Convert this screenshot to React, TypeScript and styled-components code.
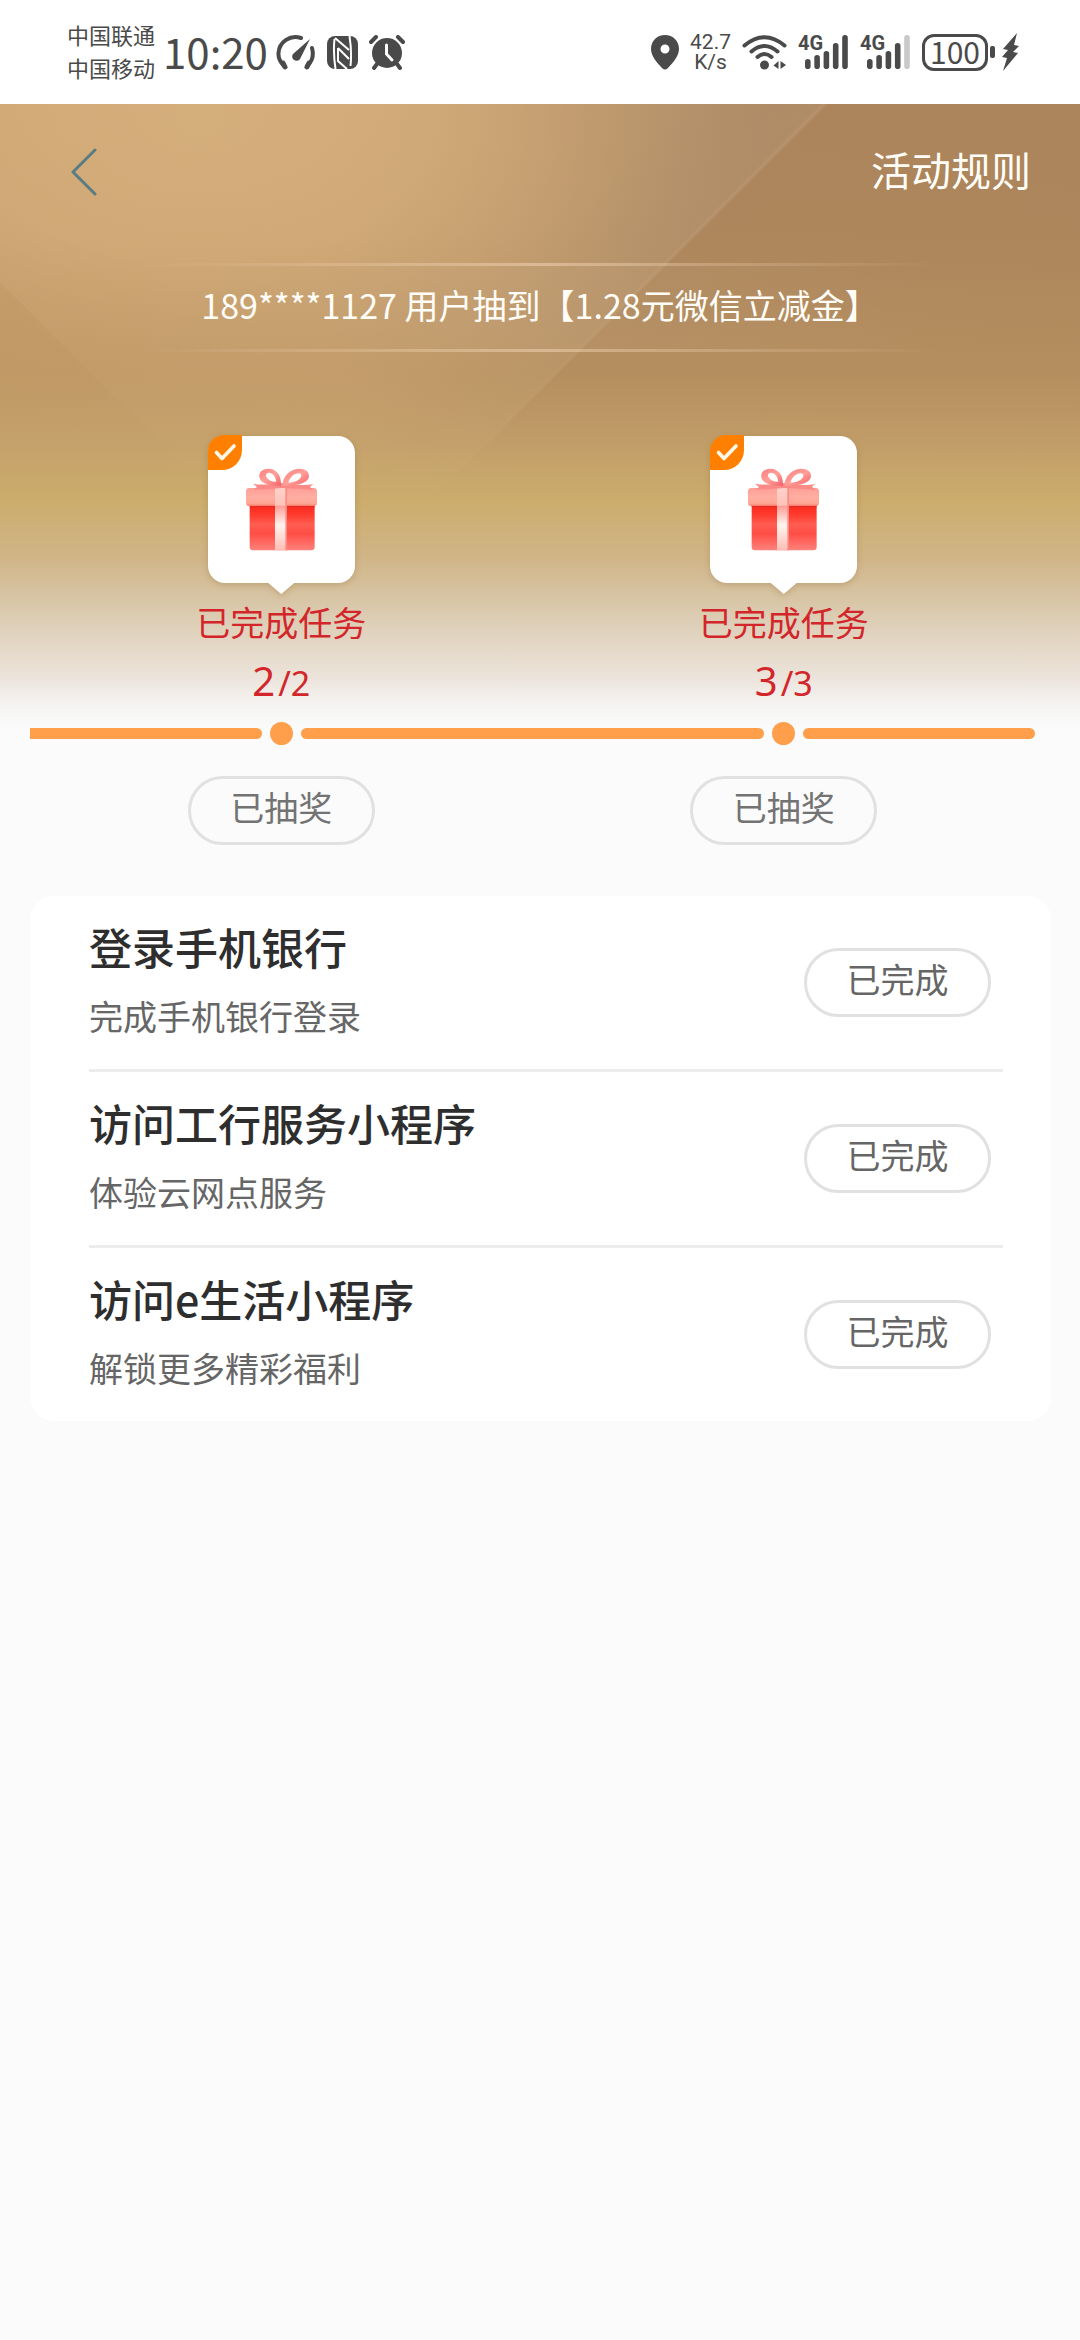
import React from "react";
import styled, { createGlobalStyle } from "styled-components";

const GlobalStyle = createGlobalStyle`
  *, *::before, *::after { box-sizing: border-box; }
  body {
    margin: 0;
    background: #fbfbfb;
    font-family: "Noto Sans CJK SC", "Noto Sans", sans-serif;
    color: #2e2e2e;
  }
  h2, p, ul, ol { margin: 0; padding: 0; }
  ul, ol { list-style: none; }
  button { font-family: inherit; cursor: pointer; }
`;

/* ---------- status bar ---------- */

const StatusBar = styled.header`
  display: flex;
  justify-content: space-between;
  align-items: center;
  height: 104px;
  padding: 0 61px 0 67px;
  background: #fff;
  color: #4a4a4a;
`;

const StatusGroup = styled.div<{ $gap: number }>`
  display: flex;
  align-items: center;
  gap: ${(p) => p.$gap}px;

  svg { display: block; flex: none; }
`;

const Carriers = styled.div`
  padding-bottom: 2px;
  font-size: 22px;
  line-height: 33px;
`;

const Clock = styled.time`
  padding-bottom: 2px;
  font-size: 42px;
  line-height: 48px;
`;

const Speed = styled.div`
  font-family: Roboto, sans-serif;
  font-size: 21px;
  line-height: 20px;
  text-align: center;
`;

const Battery = styled.div`
  display: flex;
  align-items: center;
  gap: 2px;

  &::after {
    content: "";
    width: 5px;
    height: 12px;
    border-radius: 2px;
    background: #4a4a4a;
  }
`;

const BatteryLevel = styled.span`
  width: 66px;
  padding-bottom: 3px;
  border: 3px solid #4a4a4a;
  border-radius: 12px;
  font-size: 30px;
  line-height: 28px;
  text-align: center;
`;

/* ---------- page ---------- */

const Page = styled.main`
  display: flex;
  flex-direction: column;
  padding-bottom: 48px;
  background:
    linear-gradient(180deg,
      rgba(190, 152, 98, 0) 0,
      rgba(190, 152, 98, 0.06) 130px,
      rgba(190, 152, 98, 0.5) 270px,
      rgba(197, 162, 107, 0.8) 335px,
      #ccad6d 398px,
      #d0b588 455px,
      #dccdb4 515px,
      #ebe2d8 570px,
      #f5f4f3 602px,
      #fbfbfb 626px),
    linear-gradient(45deg, rgba(180, 140, 86, 0.25) 0, rgba(180, 140, 86, 0.25) 316px, transparent 317px),
    linear-gradient(135deg,
      transparent 0,
      transparent 480px,
      rgba(178, 142, 106, 0.45) 580px,
      rgba(190, 152, 116, 0.6) 583px,
      #ac855c 586px,
      #ab845b 100%),
    radial-gradient(ellipse 560px 340px at 200px 20px, #d4ae7b 0, rgba(211, 172, 122, 0.85) 40%, rgba(205, 166, 118, 0.4) 70%, rgba(190, 150, 108, 0) 100%),
    linear-gradient(90deg, #c49c6b 0, #c59e70 30%, #b8946b 52%, #af8d67 64%, #ab845b 100%);
  background-size: 100% 626px;
  background-repeat: no-repeat;
`;

const NavBar = styled.nav`
  display: flex;
  justify-content: space-between;
  align-items: center;
  height: 136px;
  padding: 0 49px 0 59px;
`;

const BackButton = styled.button`
  display: flex;
  padding: 12px;
  border: 0;
  background: none;
`;

const RulesButton = styled.button`
  padding: 0 0 6px;
  border: 0;
  background: none;
  color: #fffdf8;
  font-size: 40px;
  line-height: 60px;
`;

const fadeLine = "linear-gradient(90deg, transparent, rgba(255, 226, 196, 0.42) 50%, transparent)";

const Notice = styled.p`
  margin: 23px 140px 84px;
  padding: 16px 0 21px;
  background:
    ${fadeLine} top / 100% 3px no-repeat,
    ${fadeLine} bottom / 100% 3px no-repeat,
    linear-gradient(90deg, transparent, rgba(200, 170, 140, 0.16) 50%, transparent);
  color: #fffdf8;
  font-size: 34px;
  line-height: 52px;
  text-align: center;
  white-space: nowrap;
`;

const Progress = styled.section`
  display: flex;
  flex-direction: column;
  margin: 0 45px 51px 30px;
`;

const Columns = styled.ul`
  display: grid;
  grid-template-columns: repeat(2, 1fr);
  justify-items: center;
`;

const Milestone = styled.li`
  display: flex;
  flex-direction: column;
  align-items: center;
  color: #d3262b;
  font-size: 34px;
  line-height: 50px;
`;

const GiftCard = styled.div`
  position: relative;
  display: flex;
  align-items: center;
  justify-content: center;
  width: 147px;
  height: 147px;
  margin-bottom: 14px;
  border-radius: 17px;
  background: #fff;
  filter: drop-shadow(0 2px 3px rgba(140, 100, 40, 0.3));

  &::after {
    content: "";
    position: absolute;
    top: 100%;
    left: 50%;
    width: 26px;
    height: 11px;
    margin-left: -13px;
    background: #fff;
    clip-path: polygon(0 0, 100% 0, 50% 100%);
  }
`;

const DoneBadge = styled.span`
  position: absolute;
  top: -1px;
  left: 0;
  width: 34px;
  height: 35px;
  border-radius: 16px 0 20px 0;
  background: #ff8000;

  svg { display: block; }
`;

const Count = styled.p`
  display: flex;
  align-items: baseline;
  gap: 3px;
  margin-top: 4px;
  font-family: "Noto Sans", sans-serif;
  line-height: 60px;
`;

const CountDone = styled.span`
  font-size: 40px;
`;

const Track = styled.div`
  display: flex;
  align-items: center;
  gap: 8px;
  margin: 9px 0 31px;
`;

const Segment = styled.span<{ $span: number; $first?: boolean }>`
  flex: ${(p) => p.$span} 1 0;
  height: 11px;
  border-radius: ${(p) => (p.$first ? "0 6px 6px 0" : "6px")};
  background: #ff9f4b;
`;

const Dot = styled.span`
  width: 23px;
  height: 23px;
  border-radius: 50%;
  background: #ff9f4b;
`;

const Pill = styled.button<{ $strong?: boolean }>`
  display: block;
  flex: none;
  width: 187px;
  height: 69px;
  padding: 0 0 8px;
  border: 3px solid #e1e1e1;
  border-radius: 35px;
  background: transparent;
  color: ${(p) => (p.$strong ? "#666" : "#737373")};
  font-size: 34px;
  line-height: 50px;
`;

const TaskList = styled.ul`
  margin: 0 29px 0 30px;
  padding: 0 48px 0 59px;
  border-radius: 24px;
  background: #fff;
`;

const TaskRow = styled.li`
  display: flex;
  align-items: center;
  justify-content: space-between;
  padding-right: 12px;

  & + & { border-top: 3px solid #ececec; }
`;

const TaskText = styled.div`
  padding: 20px 0 28px;
`;

const TaskTitle = styled.h2`
  margin-bottom: 15px;
  color: #2e2e2e;
  font-size: 43px;
  font-weight: 500;
  line-height: 60px;
`;

const TaskNote = styled.p`
  color: #666;
  font-size: 34px;
  line-height: 50px;
`;

/* ---------- drawings ---------- */

const INK = "#4a4a4a";

const GaugeIcon = () => (
  <svg width="40" height="36" viewBox="0 0 40 36" fill="none" stroke={INK} strokeWidth="4" strokeLinecap="round" aria-hidden="true">
    <path d="M8 32 Q2 26 2.500 19 A17 17 0 0 1 25 4" />
    <path d="M36 14 Q39 25 31 32" />
    <path d="M7 29 L9 33" strokeWidth="5" />
    <path d="M33 29 L31 33" strokeWidth="5" />
    <path d="M34 5 L24 25 A4 4 0 1 1 17 20 Z" fill={INK} stroke="none" />
  </svg>
);

const NfcIcon = () => (
  <svg width="31" height="33" viewBox="0 0 31 33" aria-hidden="true">
    <rect width="31" height="33" rx="8" fill={INK} />
    <path d="M7.500 3 Q6 16 8.500 33 M22.500 0 Q25 16 23.500 30" stroke="#fff" strokeWidth="2" fill="none" />
    <path d="M8 2 L22 14 M11 12 V25 L20 33 M11 12 L22 23" stroke="#fff" strokeWidth="2" fill="none" />
  </svg>
);

const AlarmIcon = () => (
  <svg width="36" height="35" viewBox="0 0 36 35" fill="none" strokeLinecap="round" aria-hidden="true">
    <circle cx="18" cy="18" r="15" fill={INK} />
    <path d="M2 7 L7 2 M34 7 L29 2 M8 29 L5 33 M28 29 L31 33" stroke={INK} strokeWidth="4" />
    <path d="M17.500 10 V19 L23 25" stroke="#fff" strokeWidth="3" />
  </svg>
);

const PinIcon = () => (
  <svg width="28" height="35" viewBox="0 0 28 35" aria-hidden="true">
    <path fillRule="evenodd" fill={INK} d="M14 0 C22 0 28 6 28 14 C28 21 22 28 16.500 33.500 Q14 35.500 11.500 33.500 C6 28 0 21 0 14 C0 6 6 0 14 0 Z M14 9.500 A4.500 4.500 0 1 0 14 18.500 A4.500 4.500 0 1 0 14 9.500 Z" />
  </svg>
);

const WifiIcon = () => (
  <svg width="45" height="35" viewBox="0 0 45 35" fill="none" stroke={INK} strokeWidth="4" strokeLinecap="round" aria-hidden="true">
    <path d="M2.500 10.500 Q22.500 -6 42.500 10.500" />
    <path d="M9.500 16.500 Q22.500 5.500 35.500 16.500" />
    <path d="M15.500 22 Q22.500 16 29.500 22" />
    <circle cx="22.500" cy="30" r="4.500" fill={INK} stroke="none" />
    <path d="M36.500 26 V34 L31.500 30.500 Z M38.500 26 V34 L44 30 Z" fill={INK} stroke="none" />
  </svg>
);

const SignalIcon = ({ level }: { level: number }) => (
  <svg width="51" height="52" viewBox="0 -8 51 52" role="img" aria-label="4G">
    <text x="0" y="16" fill={INK} fontFamily="Roboto, sans-serif" fontWeight="700" fontSize="20">4G</text>
    {[10, 14, 18, 26, 34].map((h, i) => (
      <rect key={h} x={7 + i * 9.3} y={35 - h} width="5.600" height={h} rx="2.800" fill={i < level ? INK : "#c9c9c9"} />
    ))}
  </svg>
);

const BoltIcon = () => (
  <svg width="17" height="38" viewBox="0 0 17 38" aria-hidden="true">
    <path d="M15 0 L1 16 L6 17 L0 24 L5 25 L1 38 L16 20 L11 19 L17 13 L12 12 Z" fill={INK} />
  </svg>
);

const BackIcon = () => (
  <svg width="26" height="48" viewBox="0 0 26 48" fill="none" aria-hidden="true">
    <path d="M24 2 L2 24 L24 46" stroke="#5a7c83" strokeWidth="3" strokeLinecap="round" strokeLinejoin="round" />
  </svg>
);

const CheckIcon = () => (
  <svg width="34" height="35" viewBox="0 0 34 35" fill="none" aria-hidden="true">
    <path d="M8.500 17.500 L14 23.500 L26 11" stroke="#fff8ea" strokeWidth="3.600" strokeLinecap="round" strokeLinejoin="round" />
  </svg>
);

const GiftIcon = ({ id }: { id: string }) => (
  <svg width="73" height="85" viewBox="0 0 219 255" aria-hidden="true">
    <defs>
      <linearGradient id={`${id}-body`} x1="0" y1="0" x2="0" y2="1">
        <stop offset="0" stopColor="#f8251b" />
        <stop offset="0.250" stopColor="#ff3b2e" />
        <stop offset="0.450" stopColor="#ff5d51" />
        <stop offset="0.650" stopColor="#ff4e46" />
        <stop offset="1" stopColor="#ff827b" />
      </linearGradient>
      <linearGradient id={`${id}-lid`} x1="0" y1="0" x2="0" y2="1">
        <stop offset="0" stopColor="#ff9f97" />
        <stop offset="0.500" stopColor="#ffaea2" />
        <stop offset="0.850" stopColor="#ffa796" />
        <stop offset="1" stopColor="#fb7c6c" />
      </linearGradient>
      <linearGradient id={`${id}-ribbon`} x1="0" y1="0" x2="0" y2="1">
        <stop offset="0" stopColor="#ffd2ca" />
        <stop offset="0.280" stopColor="#ffc3ba" />
        <stop offset="0.300" stopColor="#ff9f97" />
        <stop offset="0.600" stopColor="#fff3ef" />
        <stop offset="1" stopColor="#ffbdb4" />
      </linearGradient>
      <linearGradient id={`${id}-bow`} x1="0" y1="0" x2="1" y2="1">
        <stop offset="0" stopColor="#fb7e80" />
        <stop offset="0.500" stopColor="#ff9f97" />
        <stop offset="1" stopColor="#f4606b" />
      </linearGradient>
    </defs>
    <path d="M14 108 H209 V240 Q209 250 199 250 H24 Q14 250 14 240 Z" fill={`url(#${id}-body)`} />
    <path d="M14 114 H209 V121 H14 Z" fill="#d92a22" opacity="0.600" />
    <path d="M12 63 H207 Q216 63 216 74 V108 Q216 117 206 117 H13 Q3 117 3 108 V74 Q3 63 12 63 Z" fill={`url(#${id}-lid)`} />
    <rect x="90" y="61" width="36" height="189" fill={`url(#${id}-ribbon)`} />
    <rect x="121" y="61" width="5" height="189" fill="#f98b83" />
    <path d="M110 48 C90 46 60 58 24 50 L36 60 L25 68 C60 68 90 64 110 63 C140 64 170 66 206 69 L195 59 L205 51 C160 60 130 46 110 48 Z" fill="#fb8a86" />
    <path fillRule="evenodd" d="M108 57 C80 55 48 54 43 30 C41 12 56 4 74 5 C96 8 110 26 108 57 Z M94 44 C92 30 86 19 73 17 C64 16 60 25 66 32 C72 40 82 45 94 44 Z" fill={`url(#${id}-bow)`} />
    <path fillRule="evenodd" d="M112 57 C140 55 186 55 192 29 C193 12 179 4 160 5 C137 8 113 24 112 57 Z M130 47 C136 29 147 20 161 19 C172 19 171 30 163 37 C154 44 142 47 130 47 Z" fill={`url(#${id}-bow)`} />
  </svg>
);

/* ---------- data ---------- */

const milestones = [
  { done: 2, total: 2 },
  { done: 3, total: 3 },
];

const tasks = [
  { title: "登录手机银行", note: "完成手机银行登录" },
  { title: "访问工行服务小程序", note: "体验云网点服务" },
  { title: "访问e生活小程序", note: "解锁更多精彩福利" },
];

export default function App() {
  return (
    <>
      <GlobalStyle />
      <StatusBar>
        <StatusGroup $gap={8}>
          <Carriers>
            <div>中国联通</div>
            <div>中国移动</div>
          </Carriers>
          <Clock>10:20</Clock>
          <StatusGroup $gap={11}>
            <GaugeIcon />
            <NfcIcon />
            <AlarmIcon />
          </StatusGroup>
        </StatusGroup>
        <StatusGroup $gap={11}>
          <PinIcon />
          <Speed>
            <div>42.7</div>
            <div>K/s</div>
          </Speed>
          <WifiIcon />
          <SignalIcon level={5} />
          <SignalIcon level={4} />
          <StatusGroup $gap={7}>
            <Battery>
              <BatteryLevel>100</BatteryLevel>
            </Battery>
            <BoltIcon />
          </StatusGroup>
        </StatusGroup>
      </StatusBar>

      <Page>
        <NavBar>
          <BackButton type="button" aria-label="返回">
            <BackIcon />
          </BackButton>
          <RulesButton type="button">活动规则</RulesButton>
        </NavBar>

        <Notice>189****1127 用户抽到【1.28元微信立减金】</Notice>

        <Progress>
          <Columns>
            {milestones.map((m) => (
              <Milestone key={m.total}>
                <GiftCard>
                  <GiftIcon id={`gift-${m.total}`} />
                  <DoneBadge>
                    <CheckIcon />
                  </DoneBadge>
                </GiftCard>
                <p>已完成任务</p>
                <Count>
                  <CountDone>{m.done}</CountDone>
                  <span>/{m.total}</span>
                </Count>
              </Milestone>
            ))}
          </Columns>
          <Track>
            <Segment $span={1} $first />
            <Dot />
            <Segment $span={2} />
            <Dot />
            <Segment $span={1} />
          </Track>
          <Columns>
            {milestones.map((m) => (
              <li key={m.total}>
                <Pill type="button">已抽奖</Pill>
              </li>
            ))}
          </Columns>
        </Progress>

        <TaskList>
          {tasks.map((t) => (
            <TaskRow key={t.title}>
              <TaskText>
                <TaskTitle>{t.title}</TaskTitle>
                <TaskNote>{t.note}</TaskNote>
              </TaskText>
              <Pill type="button" $strong>已完成</Pill>
            </TaskRow>
          ))}
        </TaskList>
      </Page>
    </>
  );
}
